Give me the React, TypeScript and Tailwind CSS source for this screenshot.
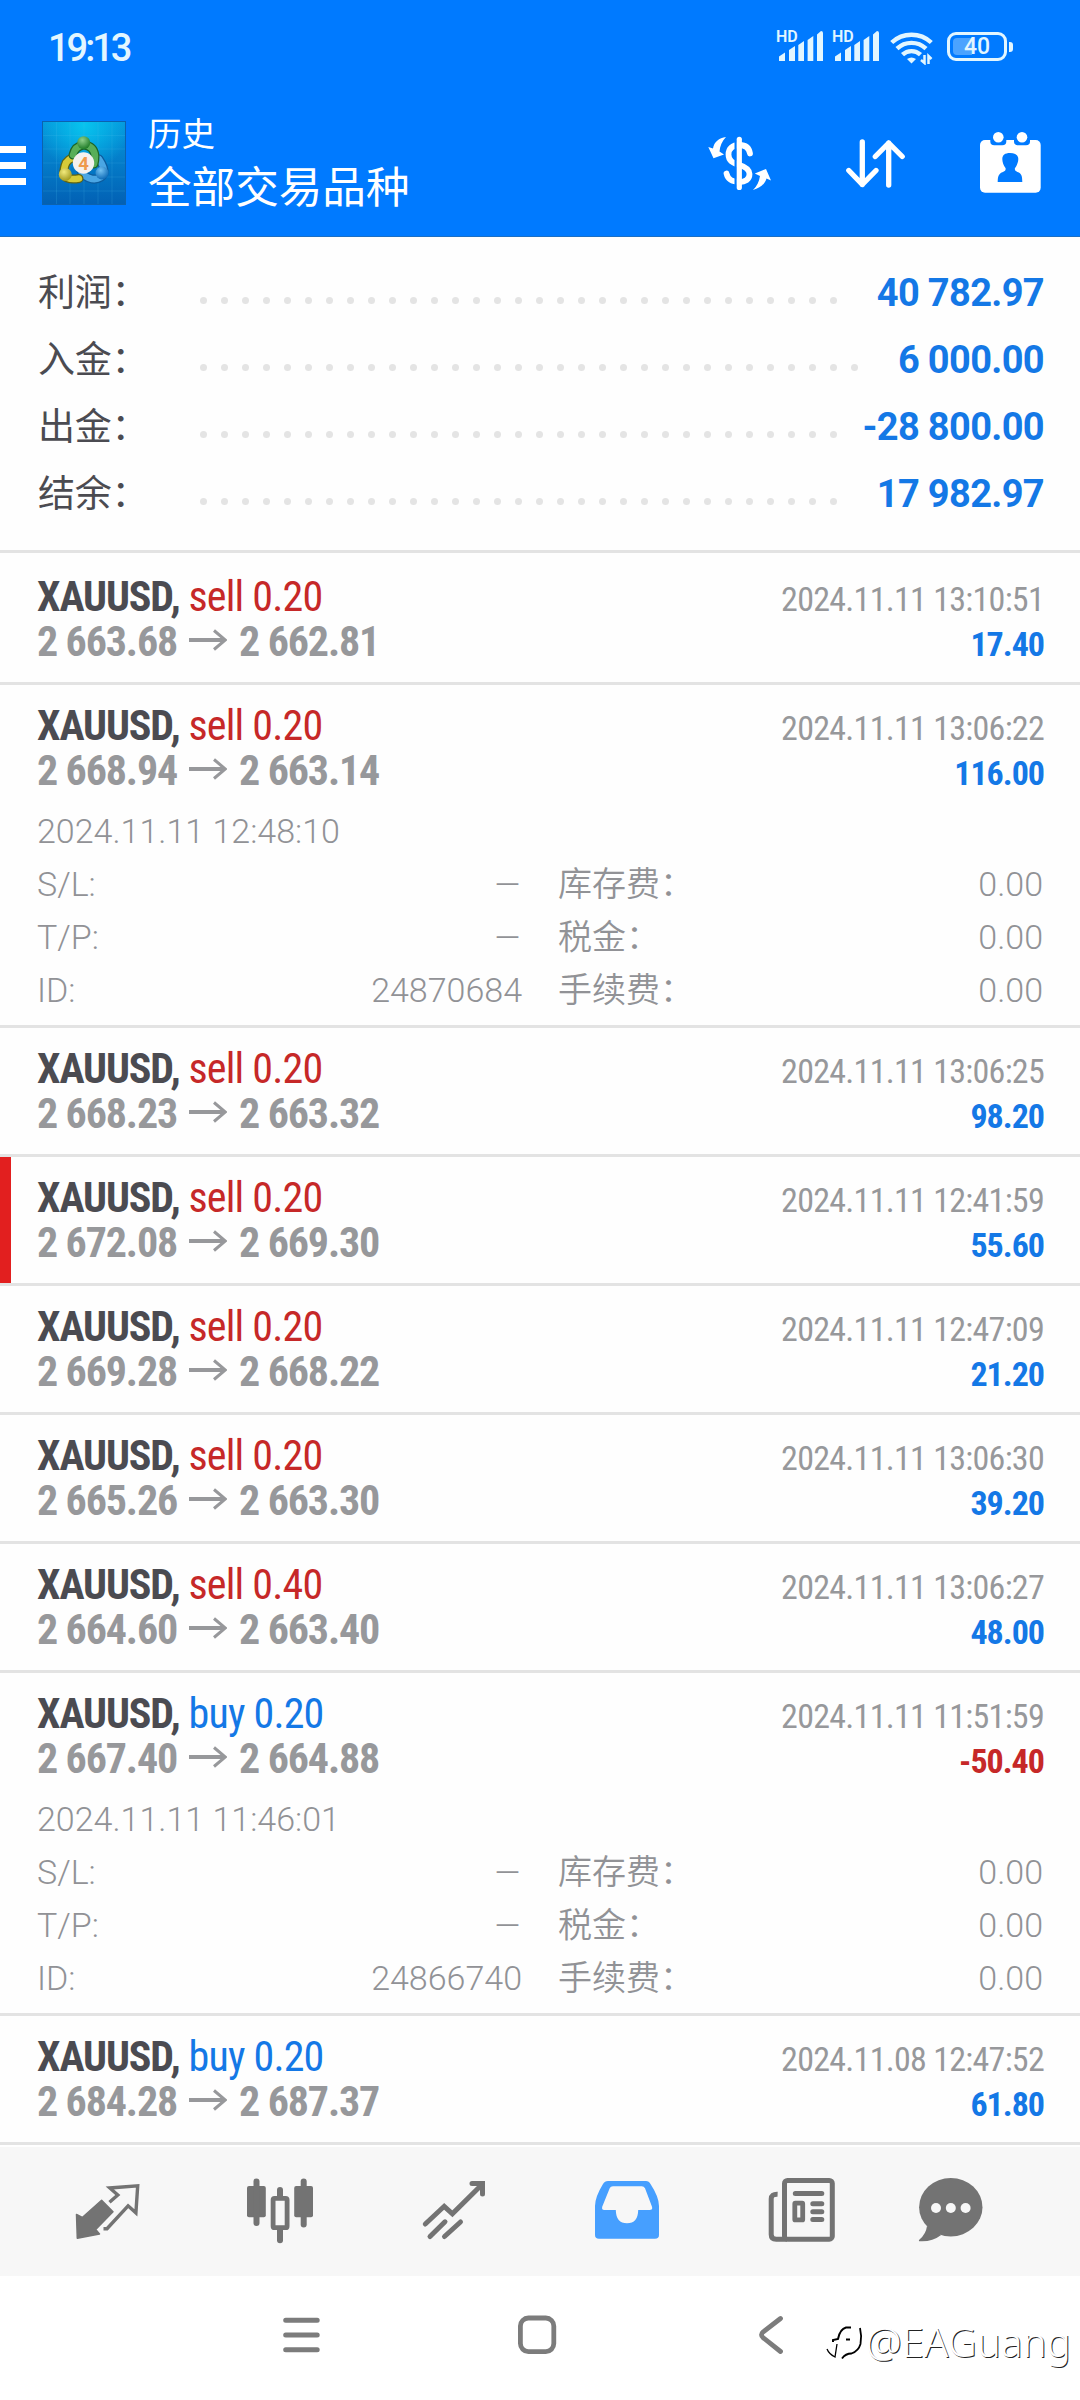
import type { ReactNode } from 'react'

interface Deal {
  side: 'sell' | 'buy'
  volume: string
  open: string
  close: string
  time: string
  profit: string
  marked?: boolean
  details?: {
    openTime: string
    id: string
  }
}

const totals = [
  { label: '利润：', value: '40 782.97' },
  { label: '入金：', value: '6 000.00' },
  { label: '出金：', value: '-28 800.00' },
  { label: '结余：', value: '17 982.97' },
]

const deals: Deal[] = [
  { side: 'sell', volume: '0.20', open: '2 663.68', close: '2 662.81', time: '2024.11.11 13:10:51', profit: '17.40' },
  {
    side: 'sell',
    volume: '0.20',
    open: '2 668.94',
    close: '2 663.14',
    time: '2024.11.11 13:06:22',
    profit: '116.00',
    details: { openTime: '2024.11.11 12:48:10', id: '24870684' },
  },
  { side: 'sell', volume: '0.20', open: '2 668.23', close: '2 663.32', time: '2024.11.11 13:06:25', profit: '98.20' },
  {
    side: 'sell',
    volume: '0.20',
    open: '2 672.08',
    close: '2 669.30',
    time: '2024.11.11 12:41:59',
    profit: '55.60',
    marked: true,
  },
  { side: 'sell', volume: '0.20', open: '2 669.28', close: '2 668.22', time: '2024.11.11 12:47:09', profit: '21.20' },
  { side: 'sell', volume: '0.20', open: '2 665.26', close: '2 663.30', time: '2024.11.11 13:06:30', profit: '39.20' },
  { side: 'sell', volume: '0.40', open: '2 664.60', close: '2 663.40', time: '2024.11.11 13:06:27', profit: '48.00' },
  {
    side: 'buy',
    volume: '0.20',
    open: '2 667.40',
    close: '2 664.88',
    time: '2024.11.11 11:51:59',
    profit: '-50.40',
    details: { openTime: '2024.11.11 11:46:01', id: '24866740' },
  },
  { side: 'buy', volume: '0.20', open: '2 684.28', close: '2 687.37', time: '2024.11.08 12:47:52', profit: '61.80' },
]

function Signal() {
  return (
    <div className="relative h-[30px] w-[48px]">
      <span className="absolute -top-[2px] left-0 font-['Roboto'] text-[16px] leading-[16px] font-semibold">HD</span>
      <svg width="48" height="30" viewBox="0 0 48 30" fill="currentColor">
        <path d="M3 30v-4.500l6-4V30zM13 30V19l6-4v15zM22.300 30V14l5.700-4v20zM31.600 30V9l5.700-4v25zM41 30V3.500L45 0q2 0 2 2v28z" />
      </svg>
    </div>
  )
}

function Wifi() {
  return (
    <svg width="44" height="34" viewBox="0 0 44 34" fill="none" stroke="currentColor" strokeWidth="4.400">
      <path d="M1.700 11.500a29 29 0 0 1 39.600 0M7 17.700a21 21 0 0 1 29 0M12.500 23.700a13 13 0 0 1 18 0" />
      <path d="M21.500 32.500L17 28q4.500-3 9 0z" fill="currentColor" stroke="none" />
      <path d="M34.500 24v8l-3.500-3M38.500 33v-8l3 3" strokeWidth="2.500" />
    </svg>
  )
}

function StatusBar() {
  return (
    <div className="flex h-[92px] items-start justify-between pt-[31px] pr-[67px] pl-[48px] text-[#e2f6ff]">
      <span className="font-['Roboto'] text-[38px] leading-[34px] font-medium tracking-[-3px]">19:13</span>
      <div className="flex items-start">
        <Signal />
        <div className="ml-2">
          <Signal />
        </div>
        <div className="ml-[10px]">
          <Wifi />
        </div>
        <div className="mt-px ml-[13px] flex items-center">
          <div className="relative flex h-[29px] w-[60px] items-center justify-center rounded-[9px] border-[3px] border-current">
            <div className="absolute top-[3px] left-[3px] h-[17px] w-[19px] rounded-l-[4px] bg-[#4ba3ff]" />
            <span className="relative font-['Roboto'] text-[23px] leading-[23px] font-medium">40</span>
          </div>
          <div className="ml-[2px] h-[10px] w-[4px] rounded-r-[3px] bg-current" />
        </div>
      </div>
    </div>
  )
}

function AppLogo() {
  return (
    <svg width="84" height="84" viewBox="0 0 84 84">
      <defs>
        <linearGradient id="bg" x1="0" y1="0" x2="0" y2="1">
          <stop offset="0" stopColor="#0597dc" />
          <stop offset="1" stopColor="#0260b4" />
        </linearGradient>
        <radialGradient id="glow" cx="0.500" cy="0.050" r="0.550">
          <stop offset="0" stopColor="#07c4ee" />
          <stop offset="1" stopColor="#07c4ee" stopOpacity="0" />
        </radialGradient>
        <radialGradient id="green" cx="0.400" cy="0.300" r="0.700">
          <stop offset="0" stopColor="#8fd08a" />
          <stop offset="1" stopColor="#1f7c28" />
        </radialGradient>
        <radialGradient id="yellow" cx="0.400" cy="0.300" r="0.700">
          <stop offset="0" stopColor="#f2ea7c" />
          <stop offset="1" stopColor="#a29a20" />
        </radialGradient>
        <radialGradient id="blue" cx="0.400" cy="0.300" r="0.700">
          <stop offset="0" stopColor="#74c2f2" />
          <stop offset="1" stopColor="#0f6cb8" />
        </radialGradient>
      </defs>
      <rect width="84" height="84" fill="url(#bg)" />
      <rect width="84" height="84" fill="url(#glow)" />
      <path
        d="M14.500 0v84M28 0v84M42 0v84M56 0v84M70 0v84M0 14.500h84M0 28h84M0 42h84M0 56h84M0 70h84"
        stroke="#4cc4f0"
        strokeOpacity="0.180"
      />
      <rect x="0.500" y="0.500" width="83" height="83" fill="none" stroke="#0c62ae" />
      <g fill="none" strokeLinecap="round">
        <path d="M57 38q6 9 5 14-3 7-12 6-8-2-11-8" stroke="#0d5c9e" strokeWidth="9" />
        <path d="M57 38q6 9 5 14-3 7-12 6-8-2-11-8" stroke="#4aa6e4" strokeWidth="6.500" />
        <path d="M33 36.500q-8 1-10 8-2 7-1 10 4 5 15 3" stroke="#5f6414" strokeWidth="9" />
        <path d="M33 36.500q-8 1-10 8-2 7-1 10 4 5 15 3" stroke="#d6cb38" strokeWidth="6.500" />
        <path d="M31 34q2-9 11-10 10 1 11 11 0 5-1 8" stroke="#1c6428" strokeWidth="9" />
        <path d="M31 34q2-9 11-10 10 1 11 11 0 5-1 8" stroke="#58ae58" strokeWidth="6.500" />
      </g>
      <circle cx="23.300" cy="53.500" r="6.500" fill="url(#yellow)" />
      <circle cx="60" cy="52" r="6.500" fill="url(#blue)" />
      <circle cx="41.700" cy="21.700" r="6.500" fill="url(#green)" />
      <circle cx="41.500" cy="42" r="10.700" fill="#f4f1ef" />
      <text x="41.500" y="48.700" textAnchor="middle" fontFamily="Roboto" fontSize="18.500" fontWeight="700" fill="#ef9a4c">
        4
      </text>
    </svg>
  )
}

function Header() {
  return (
    <div className="flex h-[145px] items-start border-b border-[#1b6fc4] text-white">
      <div className="mt-[54px] flex w-[26px] flex-col gap-[9px]">
        <span className="h-[7px] bg-white" />
        <span className="h-[7px] bg-white" />
        <span className="h-[7px] bg-white" />
      </div>
      <div className="mt-[29px] ml-4">
        <AppLogo />
      </div>
      <div className="mt-[20px] ml-[22px] flex flex-1 flex-col font-['Noto_Sans_CJK_SC',sans-serif]">
        <span className="text-[33.500px] leading-[40px]">历史</span>
        <span className="mt-[4px] text-[43.600px] leading-[56px]">全部交易品种</span>
      </div>
      <div className="mt-[37px] mr-[34px] flex gap-[63px]">
        <svg width="72" height="72" viewBox="0 0 72 72" fill="none">
          <path
            d="M46 24.500C45 18 41 16 35.500 16 28 16 24.500 20 24.500 25.500c0 6.500 4.500 8.500 11 10.500 7 2.200 10 4.500 10 9C45.500 50.500 41 53 35.500 53 29 53 23.800 50.500 22.500 44.500"
            stroke="#fff"
            strokeWidth="5.800"
            strokeLinecap="round"
          />
          <path d="M31.700 10v50" stroke="#007aff" strokeWidth="2.400" />
          <path d="M35.300 10.300v48.200" stroke="#fff" strokeWidth="5.200" strokeLinecap="round" />
          <path
            d="M22 8C15 9 10 13 9 19.500L4.300 18 9.500 29.300 20 25.500 15.500 22.500C16 17 18 12 22 8zM49 61C56 59 61 55 62.500 49.500L67 51.500 62 40 50.800 44.500 56 47C55 53 53 57 49 61z"
            fill="#fff"
          />
        </svg>
        <svg
          width="72"
          height="72"
          viewBox="0 0 72 72"
          fill="none"
          stroke="#fff"
          strokeWidth="5.300"
          strokeLinecap="round"
          strokeLinejoin="round"
        >
          <path d="M23.300 13v42.500M9.800 41.500l13.500 14 13.700-14M49.700 56V14M36.300 27.500L49.700 14l13.500 13.500" />
        </svg>
        <svg width="72" height="72" viewBox="0 0 72 72" fill="#fff">
          <rect x="6" y="11" width="60.700" height="52.700" rx="5" />
          <path d="M16.300 9h16v3.500q0 3.800-4 3.800h-8q-4 0-4-3.800zM40 9h16v3.500q0 3.800-4 3.800h-8q-4 0-4-3.800z" fill="#007aff" />
          <circle cx="24.300" cy="8.300" r="5.300" />
          <circle cx="48" cy="8.300" r="5.300" />
          <path
            d="M23.700 53c0-6 1.300-8.500 5.300-10 2.500-1 3-2.500 2.500-4-2-2.500-3.200-6-3.200-9 0-4 2.700-6 7.700-6s8.300 2 8.300 6c0 3-1.300 6.500-3.300 9-.500 1.500 0 3 2.500 4 4 1.500 4.800 4 4.800 10z"
            fill="#007aff"
          />
        </svg>
      </div>
    </div>
  )
}

function Totals() {
  return (
    <div className="h-[316px] border-b-[3px] border-[#e3e3e3] bg-[#fefefe] pt-[23px] pr-[37px] pl-[38px]">
      {totals.map((row) => (
        <div key={row.label} className="flex h-[67px] items-baseline leading-[67px]">
          <span className="w-[162px] shrink-0 font-['Roboto','Noto_Sans_CJK_SC',sans-serif] text-[37px] tracking-[-0.300px] text-[#4b4b51]">
            {row.label}
          </span>
          <div className="mt-[37px] mr-[22px] flex h-[7px] flex-1 flex-wrap gap-x-[14px] gap-y-4 self-start overflow-hidden">
            {Array.from({ length: 34 }, (_, i) => (
              <span key={i} className="size-[7px] rounded-full bg-[#e4e4e4]" />
            ))}
          </div>
          <span className="-mr-px font-['Roboto'] text-[38px] font-bold tracking-[-0.650px] text-[#1478e6]">{row.value}</span>
        </div>
      ))}
    </div>
  )
}

function DetailRow({ label, value, fee, amount }: { label: string; value: string; fee: string; amount: string }) {
  return (
    <div className="flex h-[53px]">
      <div className="flex w-[485px] justify-between">
        <span>{label}</span>
        <span className={value === '–' ? 'origin-right scale-x-130' : undefined}>{value}</span>
      </div>
      <div className="flex flex-1 justify-between pl-[36px]">
        <span>{fee}</span>
        <span>{amount}</span>
      </div>
    </div>
  )
}

function DealRow({ deal, first }: { deal: Deal; first: boolean }) {
  return (
    <div className="relative border-b-[3px] border-[#e3e3e3] bg-[#fefefe] pr-[36px] pl-[37px]">
      {deal.marked && <div className="absolute inset-y-0 left-0 w-[11px] bg-[#e21f1f]" />}
      <div className={first ? 'pt-[21px]' : 'pt-[18px]'}>
        <div className="flex h-[45px] items-baseline justify-between font-['Roboto'] text-[42px] leading-[45px] font-stretch-condensed">
          <span className="tracking-[-0.800px]">
            <span className="font-bold tracking-[-1.100px] text-[#4b4b51]">XAUUSD,</span>{' '}
            <span className={deal.side === 'sell' ? 'text-[#c62828]' : 'text-[#1478e6]'}>
              {deal.side} {deal.volume}
            </span>
          </span>
          <span className="text-[34px] tracking-[-0.720px] text-[#97989b]">{deal.time}</span>
        </div>
        <div className="flex h-[45px] items-baseline justify-between font-['Roboto'] text-[42px] leading-[45px] font-bold tracking-[-1.150px] text-[#97989b] font-stretch-condensed">
          <span className="flex items-baseline">
            {deal.open}
            <svg className="mx-3" width="38" height="27" viewBox="0 0 38 27" fill="none" stroke="currentColor">
              <path d="M0 11h36" strokeWidth="4" />
              <path d="M25 1.500L36.300 11 25 20.500" strokeWidth="3" />
            </svg>
            {deal.close}
          </span>
          <span
            className={
              deal.profit.startsWith('-')
                ? 'text-[34px] tracking-[-1px] text-[#c62828]'
                : 'text-[34px] tracking-[-1px] text-[#1478e6]'
            }
          >
            {deal.profit}
          </span>
        </div>
      </div>
      {deal.details ? (
        <div className="pt-3 pr-px pb-2 font-['Roboto','Noto_Sans_CJK_SC',sans-serif] text-[34px] leading-[53px] font-[350] text-[#919296]">
          <div className="h-[53px]">{deal.details.openTime}</div>
          <DetailRow label="S/L:" value="–" fee="库存费：" amount="0.00" />
          <DetailRow label="T/P:" value="–" fee="税金：" amount="0.00" />
          <DetailRow label="ID:" value={deal.details.id} fee="手续费：" amount="0.00" />
        </div>
      ) : (
        <div className="h-[18px]" />
      )}
    </div>
  )
}

function TabIcon({ children, last }: { children: ReactNode; last?: boolean }) {
  return (
    <div className={last ? 'flex w-[127px] justify-center' : 'flex w-[173.500px] justify-center'}>
      <svg width="72" height="73" viewBox="0 0 72 73" fill="none">
        {children}
      </svg>
    </div>
  )
}

function TabBar() {
  return (
    <div className="mt-[2px] flex h-[129px] items-center bg-[#f7f7f7] pl-5 text-[#737373]">
      <TabIcon>
        <path
          d="M5.500 39.500l5.800 3 19.300-17.300L42 36.700 24.700 54.500l3.800 4.500L6.300 63.200z"
          fill="currentColor"
          stroke="currentColor"
          strokeWidth="1.500"
          strokeLinejoin="round"
        />
        <path d="M38.500 27.300l8.300-7.300-8-7 27.900-2.200-1.800 27-7.800-7L36 53.700h-3.500" stroke="currentColor" strokeWidth="3.400" />
      </TabIcon>
      <TabIcon>
        <g fill="currentColor">
          <rect x="3" y="11" width="18.800" height="31.300" rx="2" />
          <rect x="9.500" y="3.500" width="6" height="47.500" rx="3" />
          <rect x="50.200" y="11" width="18.800" height="31.300" rx="2" />
          <rect x="56.700" y="3.500" width="6" height="49" rx="3" />
          <rect x="33" y="12" width="6" height="12" rx="3" />
          <rect x="33" y="52" width="6" height="16.300" rx="3" />
        </g>
        <rect x="29.100" y="23.300" width="14" height="29.400" rx="1.500" stroke="currentColor" strokeWidth="4.800" />
      </TabIcon>
      <TabIcon>
        <g stroke="currentColor" strokeWidth="5" strokeLinecap="round">
          <path d="M7.300 49L26.200 31.300l8.200 7.500L64 9.500" />
          <path d="M54 8.500h10.500V19" />
          <path d="M27 46.800L12 61.500M42.500 47L26.500 61.500" />
        </g>
      </TabIcon>
      <TabIcon>
        <path
          fillRule="evenodd"
          d="M17 6h38q3 0 4.500 3 8.500 13 8.500 22v29q0 3.800-4 3.800H8q-4 0-4-3.800V31q0-9 8-22 1.700-3 5-3zM22 11.300q-2.500 0-3.300 2l-7.500 18.500q-.700 3.200 2 3.200h11.600q.200 13.300 11.200 13.300T47.200 35h11.300q3.500 0 2.500-3.200l-7-18.500q-1-2-3.300-2z"
          fill="#469fff"
        />
      </TabIcon>
      <TabIcon>
        <rect x="19.500" y="5.500" width="47.800" height="58.700" rx="3" stroke="currentColor" strokeWidth="5" />
        <path d="M12.600 19.300Q6.200 19 6.200 24v35.500q0 4.700 5 4.700H22" stroke="currentColor" strokeWidth="5" />
        <rect x="29.800" y="28.200" width="7.900" height="16.700" rx="0.500" stroke="currentColor" strokeWidth="4.800" />
        <path d="M30.300 18.400h26.500M47.800 28.800h9M47.800 36.700h9M47.800 44.600h9" stroke="currentColor" strokeWidth="5" strokeLinecap="round" />
      </TabIcon>
      <TabIcon last>
        <path d="M12 51q-1 8-7.500 13.500-1.500 1.800.500 1.800Q17 67 26.200 60z" fill="currentColor" />
        <ellipse cx="35.800" cy="32.200" rx="31.700" ry="29.200" fill="currentColor" />
        <g fill="#f7f7f7">
          <circle cx="21" cy="33" r="5" />
          <circle cx="35.800" cy="33" r="5" />
          <circle cx="50.600" cy="33" r="5" />
        </g>
      </TabIcon>
    </div>
  )
}

function SystemNav() {
  return (
    <div className="relative flex h-[124px] items-start bg-white pt-[37px] pl-[281px] text-[#7c7c7c]">
      <svg width="40" height="44" viewBox="0 0 40 44" fill="none" stroke="currentColor" strokeWidth="5" strokeLinecap="round">
        <path d="M4.700 7.300h31.500M4.700 22h31.500M4.700 36.700h31.500" />
      </svg>
      <svg className="ml-[195px]" width="42" height="44" viewBox="0 0 42 44" fill="none" stroke="currentColor" strokeWidth="4.800">
        <rect x="4.400" y="5" width="33.400" height="33.600" rx="8" />
      </svg>
      <svg
        className="ml-[199px]"
        width="28"
        height="44"
        viewBox="0 0 28 44"
        fill="none"
        stroke="currentColor"
        strokeWidth="4.800"
        strokeLinecap="round"
      >
        <path d="M23.500 5.500L6 19q-3 2.800 0 5.600L23.500 38.500" />
      </svg>
      <div className="absolute top-[44px] left-[824px] flex items-start">
        <svg width="42" height="46" viewBox="0 0 42 46" fill="none" stroke="#000">
          <path d="M3 29q2 5 8 8l2-13" strokeWidth="1.300" />
          <path d="M9 22v-2l5-1q2-10 8-11.500h5" strokeWidth="2" />
          <path d="M36 8q2 8 .500 16-2 7-9 9.500-6 0-9.500 5" strokeWidth="1.800" />
          <path d="M22 19.500h4" strokeWidth="2" />
        </svg>
        <span className="font-['Noto_Sans'] text-[40px] leading-[44px] font-light tracking-[0.200px] text-white [text-shadow:1px_1px_0_#222]">
          @EAGuang
        </span>
      </div>
    </div>
  )
}

export default function App() {
  return (
    <div className="flex h-[2400px] w-[1080px] flex-col overflow-hidden bg-[#fefefe]">
      <div className="bg-[#007aff]">
        <StatusBar />
        <Header />
      </div>
      <Totals />
      <div>
        {deals.map((deal, i) => (
          <DealRow key={i} deal={deal} first={i === 0} />
        ))}
      </div>
      <TabBar />
      <SystemNav />
    </div>
  )
}
